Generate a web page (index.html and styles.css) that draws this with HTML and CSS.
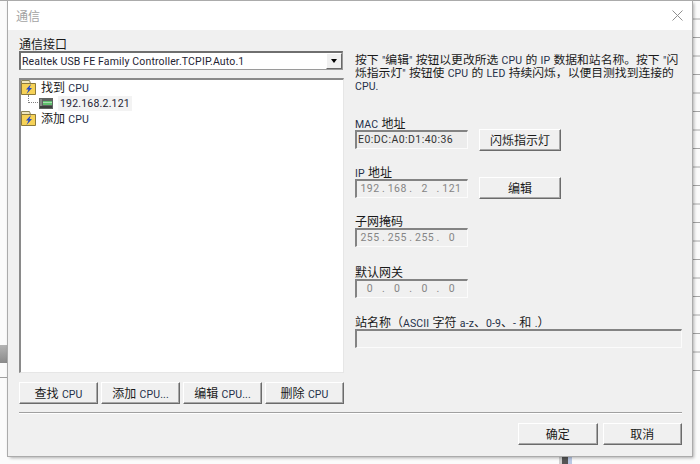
FILE: index.html
```html
<!DOCTYPE html>
<html lang="zh-CN">
<head>
<meta charset="utf-8">
<title>通信</title>
<link rel="stylesheet" href="styles.css">
</head>
<body>
<div class="backdrop">
  <span class="bg-top"></span>
  <span class="bg-tab"></span>
  <span class="bg-line"></span>
  <span class="bg-lines"></span>
  <span class="bg-handle"></span>
</div>
<main class="dialog">
  <header class="titlebar">
    <span class="title">通信</span>
    <svg class="close" width="11" height="11" viewBox="0 0 11 11"><path d="M.5.5l10 10M10.500.5l-10 10" stroke="#8f8f8f" stroke-width="1" fill="none"/></svg>
  </header>
  <div class="content">
    <div class="columns">
      <section class="left">
        <label class="lbl iface-lbl">通信接口</label>
        <div class="combo">
          <span class="combo-text l">Realtek USB FE Family Controller.TCPIP.Auto.1</span>
          <span class="combo-btn"><i class="arrow"></i></span>
        </div>
        <div class="tree">
          <div class="node">
            <svg class="folder" width="15" height="15" viewBox="0 0 15 15"><path d="M.5 13V.5h8l1 3H14V13z" fill="#eee6bd" stroke="#8d8556"/><path d="M.5 3.500h14v11H.5z" fill="#f6d257" stroke="#8d7a3a"/><path d="M10 4L5 9.500h2.500L5.500 14 11 8H8.500z" fill="#2548c4"/></svg>
            <span class="tx">找到 <span class="l">CPU</span></span>
          </div>
          <div class="node child">
            <span class="dots"></span>
            <svg class="plc" width="14" height="11" viewBox="0 0 14 11"><rect width="14" height="11" fill="#5f6461"/><rect x="1" y="1" width="2" height="9" fill="#868a87"/><rect x="4" y="3" width="9" height="4" fill="#5fbf6d"/><rect x="4" y="4" width="9" height="1" fill="#a7dcae"/><rect x="1" y="8" width="12" height="2" fill="#3c3f3d"/></svg>
            <span class="sel l">192.168.2.121</span>
          </div>
          <div class="node">
            <svg class="folder" width="15" height="15" viewBox="0 0 15 15"><path d="M.5 13V.5h8l1 3H14V13z" fill="#eee6bd" stroke="#8d8556"/><path d="M.5 3.500h14v11H.5z" fill="#f6d257" stroke="#8d7a3a"/><path d="M10 4L5 9.500h2.500L5.500 14 11 8H8.500z" fill="#2548c4"/></svg>
            <span class="tx">添加 <span class="l">CPU</span></span>
          </div>
        </div>
        <div class="btn-row">
          <button class="btn">查找 <span class="l">CPU</span></button>
          <button class="btn">添加 <span class="l">CPU...</span></button>
          <button class="btn">编辑 <span class="l">CPU...</span></button>
          <button class="btn">删除 <span class="l">CPU</span></button>
        </div>
      </section>
      <section class="right">
        <p class="help">按下 <span class="l">"</span>编辑<span class="l">"</span> 按钮以更改所选 <span class="l">CPU</span> 的 <span class="l">IP</span> 数据和站名称。按下 <span class="l">"</span>闪烁指示灯<span class="l">"</span> 按钮使 <span class="l">CPU</span> 的 <span class="l">LED</span> 持续闪烁，以便目测找到连接的 <span class="l">CPU.</span></p>
        <div class="field mac">
          <label class="lbl"><span class="l">MAC</span> 地址</label>
          <div class="field-row">
            <div class="input mac-input l">E0:DC:A0:D1:40:36</div>
            <button class="btn side side-mac">闪烁指示灯</button>
          </div>
        </div>
        <div class="field ip-field">
          <label class="lbl"><span class="l">IP</span> 地址</label>
          <div class="field-row">
            <div class="input ip l"><span>192</span><b>.</b><span>168</span><b>.</b><span>2</span><b>.</b><span>121</span></div>
            <button class="btn side side-ip">编辑</button>
          </div>
        </div>
        <div class="field mask-field">
          <label class="lbl">子网掩码</label>
          <div class="input ip l"><span>255</span><b>.</b><span>255</span><b>.</b><span>255</span><b>.</b><span>0</span></div>
        </div>
        <div class="field gw-field">
          <label class="lbl">默认网关</label>
          <div class="input ip l"><span>0</span><b>.</b><span>0</span><b>.</b><span>0</span><b>.</b><span>0</span></div>
        </div>
        <div class="field name-field">
          <label class="lbl">站名称（<span class="l">ASCII</span> 字符 <span class="l">a-z</span>、<span class="l">0-9</span>、<span class="l">-</span> 和 <span class="l">.</span>）</label>
          <div class="input wide"></div>
        </div>
      </section>
    </div>
    <hr class="sep">
    <footer class="actions">
      <button class="btn">确定</button>
      <button class="btn">取消</button>
    </footer>
  </div>
</main>
</body>
</html>
```
FILE: styles.css
```css
html, body { margin: 0; padding: 0; }
body {
  width: 700px;
  height: 464px;
  overflow: hidden;
  position: relative;
  background: #fbfbfb;
  font-family: "Liberation Sans", "Noto Sans CJK SC", sans-serif;
  font-size: 12px;
  color: #1a1a1a;
}
.l { font-family: Roboto, "Liberation Sans", sans-serif; font-size: 10.5px; color: #25304a; letter-spacing: .1px; }
.backdrop { position: absolute; inset: 0; }
.bg-top { position: absolute; left: 0; top: 0; width: 700px; height: 1px; background: #a8a8a8; }
.bg-tab { position: absolute; left: 0; top: 345px; width: 8px; height: 18px; background: linear-gradient(#b4b4b4, #8a8a8a); }
.bg-line { position: absolute; left: 0; top: 377px; width: 8px; height: 1px; background: #a0a0a0; }
.bg-lines {
  position: absolute;
  right: 0;
  top: 0;
  width: 8px;
  height: 372px;
  background: linear-gradient(to bottom, transparent 0, transparent 17.5px, #a4a4a4 17.5px, #a4a4a4 18.5px);
  background-size: 100% 18.5px;
  background-position: 0 1px;
}
.bg-handle {
  position: absolute;
  left: 559px;
  top: 456px;
  width: 13px;
  height: 8px;
  background: linear-gradient(to right, #d0d0d0 0 3px, #555 3px 9px, #b9c8e4 9px 13px);
}
.dialog {
  position: absolute;
  left: 8px;
  top: 1px;
  width: 684px;
  height: 455px;
  background: #f0f0f0;
  box-shadow: 0 0 0 1px #ababab, 2px 2px 3px rgba(0,0,0,.3), -1px 0 2px rgba(0,0,0,.08);
  display: flex;
  flex-direction: column;
}
.titlebar {
  height: 29px;
  flex: none;
  background: #fff;
  display: flex;
  align-items: center;
  justify-content: space-between;
  padding: 0 9px 0 8px;
}
.title { font-size: 12px; color: #a3a3a3; }
.content {
  flex: 1;
  display: flex;
  flex-direction: column;
  padding: 8px 10px 0 11px;
}
.columns { display: flex; gap: 11px; }
.left { width: 325px; flex: none; }
.right { flex: 1; min-width: 0; }
.lbl { display: block; font-size: 12px; height: 14px; line-height: 16px; }
.iface-lbl { line-height: 14px; }
.combo {
  margin-top: -1px;
  width: 324px;
  height: 19px;
  box-sizing: border-box;
  background: #fff;
  border: 1px solid #9a9a9a;
  border-top: 2px solid #6f6f6f;
  border-left: 2px solid #6f6f6f;
  display: flex;
  align-items: center;
  justify-content: space-between;
}
.combo-text { padding-left: 1px; color: #1f2433; letter-spacing: .15px; }
.combo-btn {
  width: 16px;
  height: 16px;
  box-sizing: border-box;
  background: #f0f0f0;
  border: 1px solid #fff;
  border-right-color: #696969;
  border-bottom-color: #696969;
  display: flex;
  align-items: center;
  justify-content: center;
}
.arrow { width: 0; height: 0; border: 3.5px solid transparent; border-top: 4px solid #000; border-bottom: 0; }
.tree {
  margin-top: 8px;
  width: 325px;
  height: 295px;
  box-sizing: border-box;
  background: #fff;
  border: 2px solid #8a8a8a;
  border-right: 1px solid #e6e6e6;
  border-bottom: 1px solid #e6e6e6;
  font-size: 12px;
}
.node { display: flex; align-items: center; gap: 5px; height: 15.5px; line-height: 15px; }
.tx { padding-top: 2px; }
.child { padding-left: 7px; gap: 0; }
.dots { width: 10px; height: 8px; margin-top: -9px; flex: none; box-sizing: border-box; border-left: 1px dotted #808080; border-bottom: 1px dotted #808080; }
.sel { background: #f3f3f3; padding: 0 2px; margin-left: 5px; letter-spacing: .2px; color: #1f2433; }
.folder { flex: none; }
.plc { flex: none; margin-left: 1px; }
.btn-row { display: flex; justify-content: space-between; margin-top: 9px; }
.btn {
  font: inherit;
  color: inherit;
  width: 79px;
  height: 22px;
  box-sizing: border-box;
  padding: 0 0 2px;
  background: #f0f0f0;
  border: 1px solid;
  border-color: #fff #6b6b6b #6b6b6b #fff;
  box-shadow: inset -1px -1px 0 #a8a8a8;
}
.help { margin: 16px 0 0 0; font-size: 11.8px; line-height: 13px; width: 327px; }
.field-row { display: flex; align-items: center; gap: 11px; }
.field.mac { margin-top: 23px; }
.ip-field, .mask-field { margin-top: 16px; }
.gw-field { margin-top: 18px; }
.name-field { margin-top: 17px; }
.input {
  width: 113px;
  height: 19px;
  box-sizing: border-box;
  background: #f0f0f0;
  border: 1px solid #fbfbfb;
  border-top: 2px solid #838383;
  border-left: 2px solid #838383;
  line-height: 16px;
}
.mac-input { padding-left: 1px; color: #333; letter-spacing: .45px; background: #ececec; }
.ip {
  color: #858585;
  display: grid;
  grid-template-columns: 24px 3.3px 24px 3.3px 24px 3.3px 24px;
  justify-items: center;
  padding-left: 1px;
  letter-spacing: .5px;
}
.ip b { font-weight: normal; }
.side { width: 82px; flex: none; }
.side-mac { margin: -1px 0 -2px; }
.side-ip { margin: -2px 0 -1px; }
.wide { width: 327px; }
.sep { border: 0; height: 0; border-top: 1px solid #a0a0a0; border-bottom: 1px solid #fff; margin: 8px 0 0 0; }
.actions { display: flex; justify-content: flex-end; gap: 5px; margin-top: 9px; }
.actions .btn { width: 79.5px; }
```
